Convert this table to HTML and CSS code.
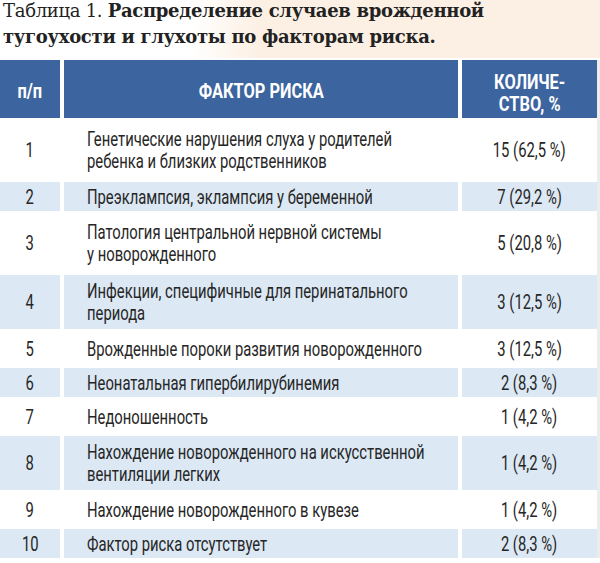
FILE: index.html
```html
<!DOCTYPE html>
<html lang="ru">
<head>
<meta charset="utf-8">
<title>Таблица 1</title>
<link rel="stylesheet" href="styles.css">
</head>
<body>
<div class="page">
  <h1 class="title"><span class="title-label">Таблица 1.</span> <b>Распределение случаев врожденной</b><br><b>тугоухости и глухоты по факторам риска.</b></h1>
  <div class="table">
    <div class="row head">
      <div class="cell num"><span class="t">п/п</span></div>
      <div class="cell factor"><span class="t">ФАКТОР РИСКА</span></div>
      <div class="cell qty"><span class="t">КОЛИЧЕ-<br>СТВО, %</span></div>
    </div>
    <div class="row tall">
      <div class="cell num"><span class="t">1</span></div>
      <div class="cell factor"><span class="t">Генетические нарушения слуха у родителей<br>ребенка и близких родственников</span></div>
      <div class="cell qty"><span class="t">15 (62,5 %)</span></div>
    </div>
    <div class="row shade single">
      <div class="cell num"><span class="t">2</span></div>
      <div class="cell factor"><span class="t">Преэклампсия, эклампсия у беременной</span></div>
      <div class="cell qty"><span class="t">7 (29,2 %)</span></div>
    </div>
    <div class="row tall">
      <div class="cell num"><span class="t">3</span></div>
      <div class="cell factor"><span class="t">Патология центральной нервной системы<br>у новорожденного</span></div>
      <div class="cell qty"><span class="t">5 (20,8 %)</span></div>
    </div>
    <div class="row shade double">
      <div class="cell num"><span class="t">4</span></div>
      <div class="cell factor"><span class="t">Инфекции, специфичные для перинатального<br>периода</span></div>
      <div class="cell qty"><span class="t">3 (12,5 %)</span></div>
    </div>
    <div class="row plain">
      <div class="cell num"><span class="t">5</span></div>
      <div class="cell factor"><span class="t">Врожденные пороки развития новорожденного</span></div>
      <div class="cell qty"><span class="t">3 (12,5 %)</span></div>
    </div>
    <div class="row shade single">
      <div class="cell num"><span class="t">6</span></div>
      <div class="cell factor"><span class="t">Неонатальная гипербилирубинемия</span></div>
      <div class="cell qty"><span class="t">2 (8,3 %)</span></div>
    </div>
    <div class="row plain">
      <div class="cell num"><span class="t">7</span></div>
      <div class="cell factor"><span class="t">Недоношенность</span></div>
      <div class="cell qty"><span class="t">1 (4,2 %)</span></div>
    </div>
    <div class="row shade double">
      <div class="cell num"><span class="t">8</span></div>
      <div class="cell factor"><span class="t">Нахождение новорожденного на искусственной<br>вентиляции легких</span></div>
      <div class="cell qty"><span class="t">1 (4,2 %)</span></div>
    </div>
    <div class="row plain">
      <div class="cell num"><span class="t">9</span></div>
      <div class="cell factor"><span class="t">Нахождение новорожденного в кувезе</span></div>
      <div class="cell qty"><span class="t">1 (4,2 %)</span></div>
    </div>
    <div class="row shade single">
      <div class="cell num"><span class="t">10</span></div>
      <div class="cell factor"><span class="t">Фактор риска отсутствует</span></div>
      <div class="cell qty"><span class="t">2 (8,3 %)</span></div>
    </div>
  </div>
</div>
</body>
</html>
```
FILE: styles.css
```css
html, body {
  margin: 0;
  padding: 0;
  background: #ffffff;
}

.page {
  width: 600px;
  height: 563px;
  overflow: hidden;
  background: linear-gradient(90deg, #ffffff 0px, #ffffff 190px, #fcf0e4 260px, #fcefe3 600px) top / 100% 58px no-repeat, #ffffff;
}

.title {
  margin: 0;
  height: 60px;
  box-sizing: border-box;
  padding: 0 0 0 3px;
  font-family: "DejaVu Serif", "Liberation Serif", serif;
  font-size: 18px;
  line-height: 26px;
  font-weight: normal;
  color: #222222;
  letter-spacing: -0.3px;
  white-space: nowrap;
  position: relative;
  top: -2px;
}

.title b {
  font-weight: bold;
}

.table {
  display: flex;
  flex-direction: column;
  gap: 3px;
  font-family: "Roboto", "Liberation Sans", sans-serif;
  font-weight: 400;
  color: #262626;
  font-size: 20px;
  line-height: 22px;
  width: 597px;
  border-right: 3px solid #ececec;
}

.row {
  display: grid;
  grid-template-columns: 60px 394px 135px;
  column-gap: 4px;
  width: 597px;
}

.cell {
  display: flex;
  align-items: center;
  white-space: nowrap;
  min-width: 0;
}

.t {
  display: inline-block;
  transform: scaleX(0.74);
}

.num .t,
.qty .t {
  transform-origin: center center;
}

.factor .t {
  transform-origin: left center;
}

.num,
.qty {
  justify-content: center;
  text-align: center;
}

.factor {
  padding-left: 23px;
}

.head {
  height: 58px;
}

.head .cell {
  background: #3c649f;
  color: #ffffff;
  font-weight: bold;
  font-size: 21px;
  line-height: 22px;
  padding-top: 3px;
  box-sizing: border-box;
}

.head .qty {
  padding-top: 8px;
}

.head .t {
  transform: scaleX(0.78);
}

.head .factor {
  justify-content: center;
  padding-left: 0;
}

.head .factor .t {
  transform-origin: center center;
}

.tall { height: 58px; }
.plain { height: 33px; }
.single { height: 29px; }
.double { height: 54px; }

.shade .cell {
  background: #dce8f4;
}
```
